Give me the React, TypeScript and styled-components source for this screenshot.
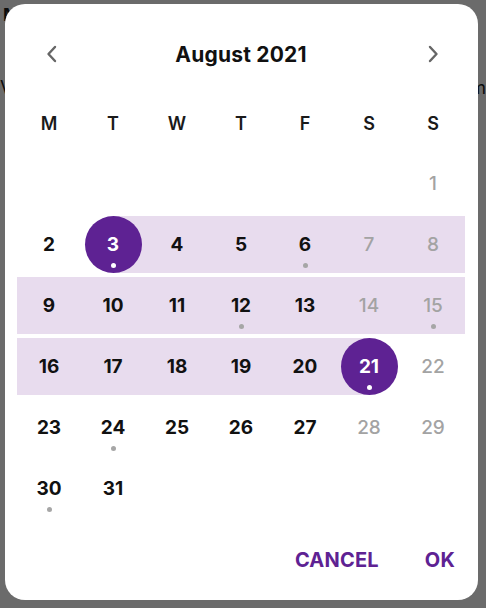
import React from "react";
import styled, { createGlobalStyle } from "styled-components";

const Global = createGlobalStyle`
  html, body { margin: 0; padding: 0; height: 100%; }
  body {
    background: #6b6b6b;
    font-family: Inter, "Noto Sans", Roboto, sans-serif;
    overflow: hidden;
  }
`;

const PURPLE = "#5e2293";
const BAND = "#e8dcee";

const BackPage = styled.div`
  height: 608px;
  padding: 4px 0 0 0;
  box-sizing: border-box;
  color: #0b0b0b;
`;

const BackHeading = styled.div`
  font-size: 18px;
  font-weight: 700;
  padding-left: 3px;
  line-height: 22px;
`;

const BackLine = styled.div`
  margin-top: 50px;
  width: 486px;
  font-size: 18px;
  line-height: 24px;
  text-align: justify;
  text-align-last: justify;
`;

const Scrim = styled.div`
  position: fixed;
  inset: 0;
  display: flex;
  align-items: flex-start;
  justify-content: flex-start;
`;

const Dialog = styled.div`
  margin: 4px 0 0 5px;
  width: 473px;
  height: 596px;
  box-sizing: border-box;
  background: #ffffff;
  border-radius: 20px;
  padding: 20px 13px 16px 12px;
  display: flex;
  flex-direction: column;
`;

const Header = styled.div`
  display: grid;
  grid-template-columns: 70px 1fr 64px;
  align-items: center;
  height: 60px;
`;

const NavButton = styled.button`
  border: none;
  background: none;
  padding: 0;
  display: flex;
  align-items: center;
  justify-content: center;
  height: 40px;
  color: #666;
  cursor: pointer;
`;

const Title = styled.div`
  text-align: center;
  font-size: 21px;
  font-weight: 700;
  color: #111;
  letter-spacing: 0.2px;
  margin-right: 6px;
`;

const WeekRow = styled.div`
  margin-top: 14px;
  height: 50px;
  display: grid;
  grid-template-columns: repeat(7, 64px);
  align-items: center;
`;

const WeekDay = styled.div`
  text-align: center;
  font-size: 18px;
  font-weight: 600;
  color: #1a1a1a;
`;

const Grid = styled.div`
  margin-top: 5px;
  display: grid;
  grid-template-columns: repeat(7, 64px);
  grid-auto-rows: 61px;
`;

type BandKind = "none" | "full" | "start" | "end";

const bandBg = (b: BandKind) => {
  switch (b) {
    case "full":
      return BAND;
    case "start":
      return `linear-gradient(to right, transparent 50%, ${BAND} 50%)`;
    case "end":
      return `linear-gradient(to right, ${BAND} 50%, transparent 50%)`;
    default:
      return "transparent";
  }
};

const Band = styled.div<{ $band: BandKind }>`
  margin: 2px 0;
  height: 57px;
  background: ${(p) => bandBg(p.$band)};
  display: flex;
  justify-content: center;
`;

const Day = styled.div<{ $selected: boolean; $muted: boolean }>`
  width: 57px;
  height: 57px;
  border-radius: 50%;
  background: ${(p) => (p.$selected ? PURPLE : "transparent")};
  display: grid;
  grid-template-rows: 1fr auto 1fr;
  justify-items: center;
  color: ${(p) => (p.$selected ? "#fff" : p.$muted ? "#a3a3a3" : "#111")};
  font-size: 19px;
  font-weight: ${(p) => (p.$muted ? 500 : 700)};
`;

const Num = styled.div`
  grid-row: 2;
  line-height: 24px;
`;

const Dot = styled.div<{ $selected: boolean }>`
  grid-row: 3;
  margin-top: 6px;
  width: 5px;
  height: 5px;
  border-radius: 50%;
  background: ${(p) => (p.$selected ? "#fff" : "#a6a6a6")};
`;

const Footer = styled.div`
  margin-top: auto;
  height: 48px;
  display: flex;
  justify-content: flex-end;
  align-items: center;
  gap: 30px;
  padding-right: 2px;
`;

const ActionButton = styled.button`
  border: none;
  background: none;
  padding: 8px;
  font-family: Inter, "Noto Sans", Roboto, sans-serif;
  font-size: 20px;
  font-weight: 700;
  color: ${PURPLE};
  letter-spacing: 0.2px;
  cursor: pointer;
`;

const Chevron = ({ dir }: { dir: "left" | "right" }) => (
  <svg width="14" height="18" viewBox="0 0 14 18" fill="none">
    <path
      d={dir === "left" ? "M10 2 L3.5 9 L10 16" : "M4 2 L10.5 9 L4 16"}
      stroke="currentColor"
      strokeWidth="2.4"
      strokeLinecap="round"
      strokeLinejoin="round"
    />
  </svg>
);

const WEEKDAYS = ["M", "T", "W", "T", "F", "S", "S"];
const RANGE_START = 3;
const RANGE_END = 21;
const DOTS = new Set([3, 6, 12, 15, 21, 24, 30]);

export default function App() {
  // August 2021 starts on a Sunday -> 6 blanks in a Monday-first grid
  const offset = 6;
  const cells: (number | null)[] = [];
  for (let i = 0; i < offset; i++) cells.push(null);
  for (let d = 1; d <= 31; d++) cells.push(d);

  return (
    <>
      <Global />
      <BackPage>
        <BackHeading>My calendar</BackHeading>
        <BackLine>View your bookings in the calendar and plan them</BackLine>
      </BackPage>
      <Scrim>
        <Dialog>
          <Header>
            <NavButton aria-label="Previous month">
              <Chevron dir="left" />
            </NavButton>
            <Title>August 2021</Title>
            <NavButton aria-label="Next month">
              <Chevron dir="right" />
            </NavButton>
          </Header>
          <WeekRow>
            {WEEKDAYS.map((w, i) => (
              <WeekDay key={i}>{w}</WeekDay>
            ))}
          </WeekRow>
          <Grid>
            {cells.map((d, i) => {
              if (d === null) return <div key={i} />;
              const col = i % 7;
              const weekend = col >= 5;
              const selected = d === RANGE_START || d === RANGE_END;
              let band: BandKind = "none";
              if (d === RANGE_START) band = "start";
              else if (d === RANGE_END) band = "end";
              else if (d > RANGE_START && d < RANGE_END) band = "full";
              return (
                <Band key={i} $band={band}>
                  <Day $selected={selected} $muted={weekend && !selected}>
                    <Num>{d}</Num>
                    {DOTS.has(d) && <Dot $selected={selected} />}
                  </Day>
                </Band>
              );
            })}
          </Grid>
          <Footer>
            <ActionButton>CANCEL</ActionButton>
            <ActionButton>OK</ActionButton>
          </Footer>
        </Dialog>
      </Scrim>
    </>
  );
}
